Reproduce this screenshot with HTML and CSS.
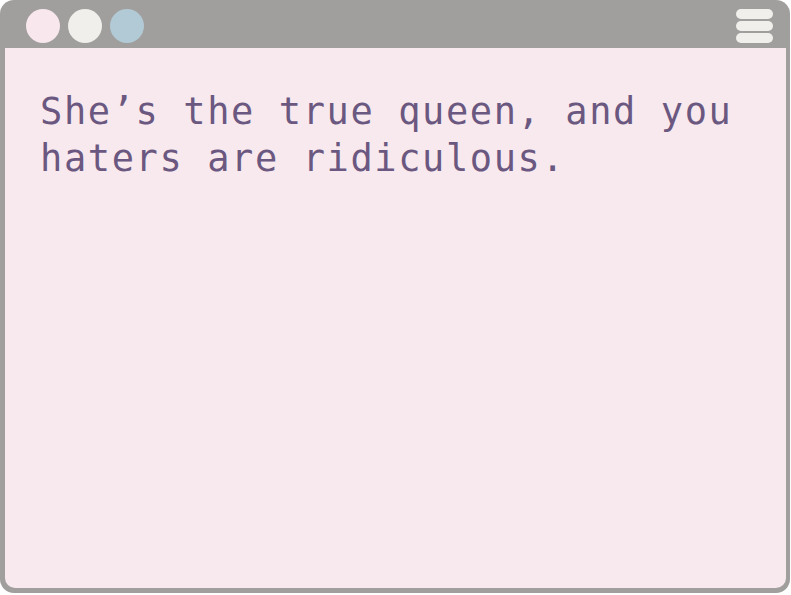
FILE: index.html
```html
<!DOCTYPE html>
<html>
<head>
<meta charset="utf-8">
<link rel="stylesheet" href="styles.css">
</head>
<body>
<div class="window">
  <div class="titlebar">
    <div class="dots">
      <span class="dot dot-pink"></span>
      <span class="dot dot-cream"></span>
      <span class="dot dot-blue"></span>
    </div>
    <div class="menu">
      <span class="bar"></span>
      <span class="bar"></span>
      <span class="bar"></span>
    </div>
  </div>
  <div class="content">
    <p class="message">She’s the true queen, and you haters are ridiculous.</p>
  </div>
</div>
</body>
</html>
```
FILE: styles.css
```css
html, body {
  margin: 0;
  padding: 0;
  background: #ffffff;
}
.window {
  width: 790px;
  height: 593px;
  background: #a09f9d;
  border-radius: 14px;
  display: flex;
  flex-direction: column;
  box-sizing: border-box;
  padding: 0 4px 5px 5px;
}
.titlebar {
  height: 48px;
  flex: none;
  display: flex;
  align-items: flex-start;
  justify-content: space-between;
}
.dots {
  display: flex;
  gap: 8px;
  padding: 9px 0 0 21px;
}
.dot {
  width: 34px;
  height: 34px;
  border-radius: 50%;
  display: block;
}
.dot-pink { background: #f8e8ee; }
.dot-cream { background: #f1efeb; }
.dot-blue { background: #b1cad6; }
.menu {
  display: flex;
  flex-direction: column;
  gap: 2px;
  padding: 9px 13px 0 0;
}
.bar {
  display: block;
  width: 37px;
  height: 10px;
  border-radius: 5px;
  background: #f1efeb;
}
.content {
  flex: 1;
  background: #f8e9ee;
  border-radius: 0 0 10px 10px;
  padding: 40px 30px 0 35px;
}
.message {
  margin: 0;
  font-family: "DejaVu Sans Mono", monospace;
  font-size: 37px;
  line-height: 47px;
  letter-spacing: 1.6px;
  color: #6b5880;
}
```
